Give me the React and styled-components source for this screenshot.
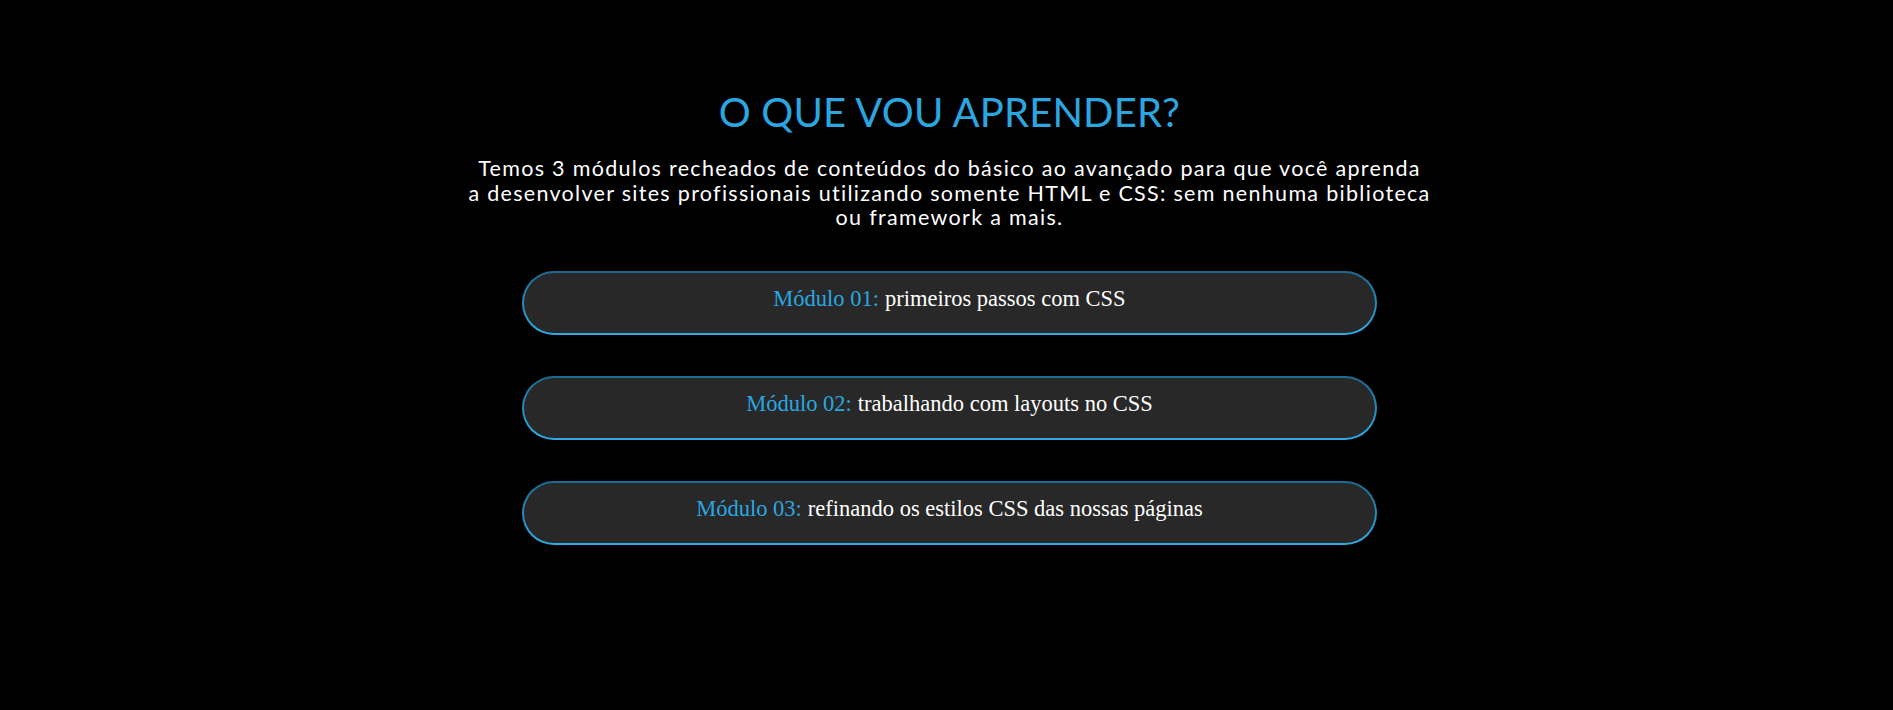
import React from "react";
import styled, { createGlobalStyle } from "styled-components";

const GlobalStyle = createGlobalStyle`
  * { box-sizing: border-box; }
  html, body { margin: 0; padding: 0; background: #000; }
  body { font-family: "Lato", "Liberation Sans", sans-serif; }
`;

const Section = styled.section`
  min-height: 710px;
  background: #000;
  display: flex;
  flex-direction: column;
  align-items: center;
  padding: 88px 0 0 6px;
`;

const Title = styled.h2`
  margin: 0;
  font-family: "Lato", "Liberation Sans", sans-serif;
  font-weight: 400;
  font-size: 40px;
  line-height: 48px;
  color: #2aa7e0;
  letter-spacing: 0.15px;
`;

const Lead = styled.p`
  margin: 20px 0 0;
  font-family: "Lato", "Liberation Sans", sans-serif;
  font-size: 21.5px;
  line-height: 24.5px;
  letter-spacing: 1.3px;
  color: #fff;
  text-align: center;
`;

const ModuleList = styled.ul`
  list-style: none;
  margin: 41px 0 0;
  padding: 0;
  display: flex;
  flex-direction: column;
  gap: 41px;
`;

const ModuleCard = styled.li`
  width: 855px;
  height: 64px;
  border-radius: 32px;
  border: 2px solid transparent;
  background:
    linear-gradient(#282828, #282828) padding-box,
    linear-gradient(#1b6a93, #2eabe6) border-box;
  display: flex;
  align-items: center;
  justify-content: center;
  padding-bottom: 8px;
  font-family: "Liberation Serif", "Times New Roman", serif;
  font-size: 22.5px;
  color: #fff;
`;

const ModuleLabel = styled.span`
  color: #2aa7e0;
  margin-right: 6px;
`;

const modules = [
  { n: "01", text: "primeiros passos com CSS" },
  { n: "02", text: "trabalhando com layouts no CSS" },
  { n: "03", text: "refinando os estilos CSS das nossas páginas" },
];

export default function App() {
  return (
    <>
      <GlobalStyle />
      <Section>
        <Title>O QUE VOU APRENDER?</Title>
        <Lead>
          Temos 3 módulos recheados de conteúdos do básico ao avançado para que você aprenda
          <br />
          a desenvolver sites profissionais utilizando somente HTML e CSS: sem nenhuma biblioteca
          <br />
          ou framework a mais.
        </Lead>
        <ModuleList>
          {modules.map((m) => (
            <ModuleCard key={m.n}>
              <ModuleLabel>Módulo {m.n}:</ModuleLabel>
              {m.text}
            </ModuleCard>
          ))}
        </ModuleList>
      </Section>
    </>
  );
}
